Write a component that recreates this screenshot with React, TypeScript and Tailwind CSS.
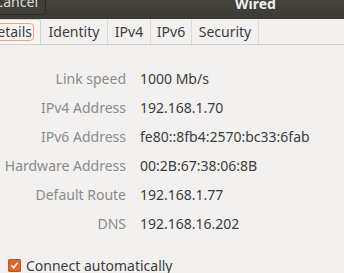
export default function App() {
  const rows: [string, string][] = [
    ["Link speed", "1000 Mb/s"],
    ["IPv4 Address", "192.168.1.70"],
    ["IPv6 Address", "fe80::8fb4:2570:bc33:6fab"],
    ["Hardware Address", "00:2B:67:38:06:8B"],
    ["Default Route", "192.168.1.77"],
    ["DNS", "192.168.16.202"],
  ];

  return (
    <div
      className="h-[273px] w-[344px] overflow-hidden bg-[#f2f1f0] text-[14px]"
      style={{ fontFamily: '"Noto Sans", "Open Sans", sans-serif' }}
    >
      {/* header bar */}
      <div className="relative h-[19px] bg-gradient-to-b from-[#45443f] to-[#3a3934]">
        <div className="absolute -top-[12px] -left-[20px] flex h-[27px] w-[66px] items-center justify-end rounded-[4px] border border-[#2a2926] bg-[#403f3a] pr-[7px] text-[#dfdbd2]">
          Cancel
        </div>
        <div className="absolute -top-[7px] left-[235px] font-bold text-[#eeeeec]">Wired</div>
      </div>

      {/* tabs */}
      <div className="flex h-[26px] border-b border-[#d2d0cb] text-[#3c3c3c]">
        <div className="-ml-[8px] flex w-[49px] items-center justify-end rounded-t-[3px] border border-b-0 border-[#d5d3ce] bg-[#f7f6f5] pr-[6px]">
          <span className="rounded-[4px] border border-[#f0a58a] px-[1px] leading-[16px] text-[#3c3c3c]">Details</span>
        </div>
        <div className="flex w-[67px] items-center justify-center border-r border-[#dcdad5]">Identity</div>
        <div className="flex w-[43px] items-center justify-center border-r border-[#dcdad5]">IPv4</div>
        <div className="flex w-[41px] items-center justify-center border-r border-[#dcdad5]">IPv6</div>
        <div className="flex w-[67px] items-center justify-center border-r border-[#dcdad5]">Security</div>
      </div>

      {/* details */}
      <div className="grid grid-cols-[126px_1fr] gap-x-[14px] gap-y-[9px] pt-[24px] leading-[20px]">
        {rows.map(([k, v]) => (
          <div key={k} className="contents">
            <div className="whitespace-nowrap text-right text-[#8b8b89]">{k}</div>
            <div className="whitespace-nowrap text-[#3c3c3c]">{v}</div>
          </div>
        ))}
      </div>

      <div className="mt-[21px] flex items-center gap-[5px] pl-[8px] text-[#3c3c3c]">
        <span className="flex h-[13px] w-[13px] items-center justify-center rounded-[2px] bg-[#e0642d] shadow-[inset_0_0_0_1px_#c4531f]">
          <svg width="9" height="9" viewBox="0 0 9 9">
            <path d="M1.5 4.5 L3.7 6.8 L7.6 1.8" fill="none" stroke="#fff" strokeWidth="1.7" />
          </svg>
        </span>
        <span>Connect automatically</span>
      </div>
    </div>
  );
}
